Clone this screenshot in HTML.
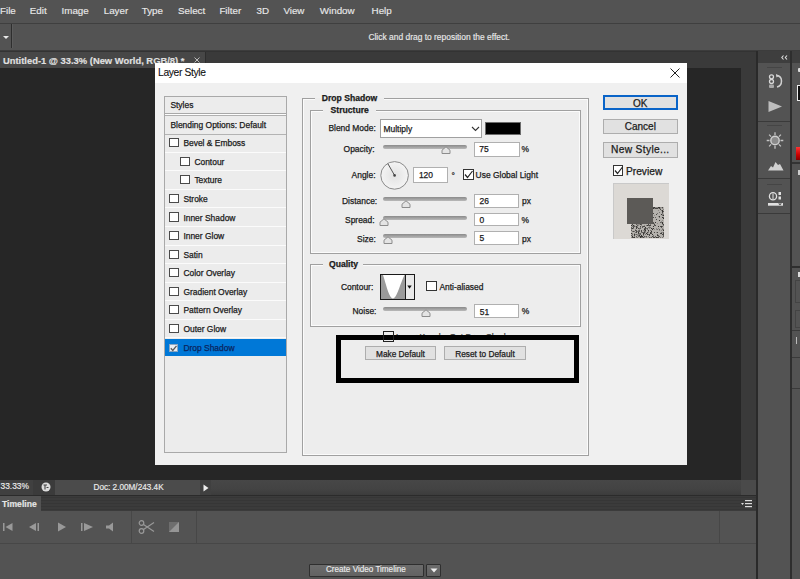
<!DOCTYPE html>
<html><head><meta charset="utf-8">
<style>
*{box-sizing:border-box;margin:0;padding:0}
html,body{width:800px;height:579px;overflow:hidden;background:#262626;font-family:"Liberation Sans",sans-serif;position:relative}
.a{position:absolute}
.t{position:absolute;white-space:nowrap;line-height:1}
.t{-webkit-text-stroke:0.15px currentColor}
.dl .t,.dl .btn{-webkit-text-stroke:0.25px currentColor}
.btn{position:absolute;background:#e1e1e1;border:1px solid #adadad;text-align:center;font-size:8.3px;color:#1b1b1b;line-height:12px;white-space:nowrap}
</style></head><body>
<!-- MENU -->
<div class="a" style="left:0;top:0;width:800px;height:23px;background:#535353"></div>
<div class="a" style="left:0;top:23px;width:800px;height:1px;background:#3f3f3f"></div>
<span class="t" style="left:0.0px;top:6.30px;font-size:9.80px;color:#e8e8e8;">File</span>
<span class="t" style="left:29.8px;top:6.30px;font-size:9.80px;color:#e8e8e8;">Edit</span>
<span class="t" style="left:61.5px;top:6.30px;font-size:9.80px;color:#e8e8e8;">Image</span>
<span class="t" style="left:103.7px;top:6.30px;font-size:9.80px;color:#e8e8e8;">Layer</span>
<span class="t" style="left:141.7px;top:6.30px;font-size:9.80px;color:#e8e8e8;">Type</span>
<span class="t" style="left:178.0px;top:6.30px;font-size:9.80px;color:#e8e8e8;">Select</span>
<span class="t" style="left:219.4px;top:6.30px;font-size:9.80px;color:#e8e8e8;">Filter</span>
<span class="t" style="left:256.6px;top:6.30px;font-size:9.80px;color:#e8e8e8;">3D</span>
<span class="t" style="left:283.4px;top:6.30px;font-size:9.80px;color:#e8e8e8;">View</span>
<span class="t" style="left:319.8px;top:6.30px;font-size:9.80px;color:#e8e8e8;">Window</span>
<span class="t" style="left:371.6px;top:6.30px;font-size:9.80px;color:#e8e8e8;">Help</span>
<!-- OPTIONS -->
<div class="a" style="left:0;top:24px;width:800px;height:27px;background:#535353"></div>
<div class="a" style="left:0;top:50px;width:800px;height:1px;background:#3c3c3c"></div>
<div class="a" style="left:3px;top:36px;width:0;height:0;border-left:3px solid transparent;border-right:3px solid transparent;border-top:3px solid #e8e8e8"></div>
<div class="a" style="left:11px;top:24px;width:1px;height:24px;background:#2e2e2e"></div>
<div class="a" style="left:12px;top:24px;width:1px;height:24px;background:#5c5c5c"></div>
<span class="t" style="left:368.4px;top:32.85px;font-size:8.45px;color:#e8e8e8;">Click and drag to reposition the effect.</span>
<!-- TAB BAR -->
<div class="a" style="left:0;top:51px;width:756px;height:17px;background:#3a3a3a"></div>
<div class="a" style="left:0;top:51px;width:756px;height:1px;background:#333"></div>
<div class="a" style="left:0;top:52px;width:205px;height:16px;background:#474747"></div>
<div class="a" style="left:205px;top:52px;width:1px;height:16px;background:#2e2e2e"></div>
<span class="t" style="left:3.0px;top:56.44px;font-size:9.40px;color:#e0e0e0;font-weight:bold;">Untitled-1 @ 33.3% (New World, RGB/8) *</span><svg class="a" style="left:194px;top:57px" width="6" height="6"><path d="M0.5 0.5L5.5 5.5M5.5 0.5L0.5 5.5" stroke="#bbb" stroke-width="1"/></svg>
<!-- RIGHT -->
<div class="a" style="left:741px;top:68px;width:15px;height:412px;background:#3a3a3a"></div>
<div class="a" style="left:756px;top:51px;width:2px;height:528px;background:#2a2a2a"></div>
<div class="a" style="left:758px;top:51px;width:42px;height:12px;background:#3e3e3e"></div>
<div class="a" style="left:758px;top:63px;width:32px;height:516px;background:#535353"></div>
<div class="a" style="left:790px;top:51px;width:2px;height:528px;background:#2e2e2e"></div>
<div class="a" style="left:792px;top:63px;width:8px;height:516px;background:#535353"></div>
<!-- STATUS -->
<div class="a" style="left:0;top:480px;width:741px;height:15px;background:linear-gradient(#474747,#434343 60%,#3c3c3c)"></div>
<div class="a" style="left:0;top:480px;width:33px;height:15px;background:#404040"></div>
<div class="a" style="left:33px;top:480px;width:22px;height:15px;background:#3b3b3b"></div>
<div class="a" style="left:55px;top:480px;width:145px;height:15px;background:#4b4b4b"></div>
<div class="a" style="left:200px;top:480px;width:11px;height:15px;background:#404040"></div>
<div class="a" style="left:741px;top:480px;width:15px;height:15px;background:#4a4a4a"></div>
<!-- TIMELINE -->
<div class="a" style="left:0;top:495px;width:756px;height:16px;background:repeating-linear-gradient(#3b3b3b 0 2px,#363636 2px 3px)"></div>
<div class="a" style="left:0;top:495px;width:756px;height:1px;background:#2b2b2b"></div>
<div class="a" style="left:0;top:496px;width:41px;height:15px;background:#535353"></div>
<div class="a" style="left:0;top:511px;width:756px;height:68px;background:#535353"></div>
<div class="a" style="left:0;top:543px;width:756px;height:1px;background:#474747"></div>
<div class="a" style="left:131px;top:511px;width:1px;height:32px;background:#474747"></div>
<div class="a" style="left:196px;top:511px;width:1px;height:32px;background:#474747"></div>
<div class="a" style="left:719px;top:511px;width:1px;height:32px;background:#474747"></div>
<span class="t" style="left:0.5px;top:482.39px;font-size:8.40px;color:#ececec;">33.33%</span>
<svg class="a" style="left:40.5px;top:482px" width="10" height="10"><circle cx="5" cy="5" r="4.5" fill="#dcdcdc"/><path d="M2.5 3H6M4 3V7.5M5.5 5.5L7.5 5.5" stroke="#444" stroke-width="1.1"/></svg>
<span class="t" style="left:93.5px;top:483.86px;font-size:8.20px;color:#ececec;">Doc: 2.00M/243.4K</span>
<svg class="a" style="left:203px;top:484px" width="6" height="8"><path d="M0.5 0.5L5.5 4L0.5 7.5Z" fill="#eee"/></svg>
<span class="t" style="left:2.0px;top:499.72px;font-size:8.60px;color:#e6e6e6;font-weight:bold;">Timeline</span>
<svg class="a" style="left:0px;top:520px" width="130" height="14"><rect x="3" y="3" width="1.5" height="8" fill="#999999"/><path d="M12.5 3V11L5.5 7Z" fill="#999999"/><path d="M36 3V11L29 7Z" fill="#999999"/><rect x="37.5" y="3" width="1.5" height="8" fill="#999999"/><path d="M58 2.5V11.5L66 7Z" fill="#999999"/><rect x="81" y="3" width="1.5" height="8" fill="#999999"/><path d="M84 3V11L93 7Z" fill="#999999"/><path d="M106 5.5H109L113 2.5V11.5L109 8.5H106Z" fill="#999999"/></svg>
<svg class="a" style="left:138px;top:519px" width="50" height="16"><circle cx="3.5" cy="4" r="2.3" fill="none" stroke="#999999" stroke-width="1.2"/><circle cx="3.5" cy="12" r="2.3" fill="none" stroke="#999999" stroke-width="1.2"/><path d="M5.5 5.5L16 12.5M5.5 10.5L16 3.5" stroke="#999999" stroke-width="1.2"/><rect x="31" y="3" width="10" height="10" fill="#6e6e6e"/><path d="M31 13L41 3V13Z" fill="#959595"/></svg>
<svg class="a" style="left:781px;top:55px" width="7" height="5"><path d="M2.5 0.5L0.8 2.5L2.5 4.5M6 0.5L4.3 2.5L6 4.5" stroke="#ddd" stroke-width="1.1" fill="none"/></svg>
<div class="a" style="left:758px;top:121px;width:32px;height:1px;background:#3a3a3a"></div>
<div class="a" style="left:758px;top:178px;width:32px;height:1px;background:#3a3a3a"></div>
<div class="a" style="left:758px;top:213px;width:32px;height:1px;background:#3a3a3a"></div>
<svg class="a" style="left:758px;top:63px" width="32" height="150"><rect x="9" y="4" width="15" height="1" fill="#454545"/><circle cx="13.5" cy="13.8" r="2" fill="none" stroke="#d8d8d8" stroke-width="1.3"/><circle cx="13.5" cy="18.5" r="2" fill="none" stroke="#d8d8d8" stroke-width="1.3"/><rect x="11" y="21.5" width="5" height="3.5" rx="1" fill="#a8a8a8"/><path d="M18.5 12.5Q23.5 13 23.5 18Q23.5 23 19 24" stroke="#d0d0d0" stroke-width="1.5" fill="none"/><path d="M18 11L21 12.5L18.5 14.5Z" fill="#d0d0d0"/><path d="M10.5 38V49L24 43.5Z" fill="#bdbdbd"/><rect x="9" y="62" width="15" height="1" fill="#454545"/><path d="M22.5 77.5L25.3 77.5M20.9 81.4L22.9 83.4M17.0 83.0L17.0 85.8M13.1 81.4L11.1 83.4M11.5 77.5L8.7 77.5M13.1 73.6L11.1 71.6M17.0 72.0L17.0 69.2M20.9 73.6L22.9 71.6" stroke="#c4c4c4" stroke-width="1.3"/><circle cx="17" cy="77.5" r="4.2" fill="#8a8a8a" stroke="#d0d0d0" stroke-width="1.4"/><path d="M10 107.5L13 103L15 104.5L17.5 99L20 102L22 101L25.5 107.5Z" fill="#d0d0d0"/><rect x="9" y="121" width="15" height="1" fill="#454545"/><circle cx="15" cy="133.2" r="3.6" fill="none" stroke="#e0e0e0" stroke-width="1.3"/><path d="M15 130.5V136" stroke="#e0e0e0" stroke-width="1"/><rect x="20.5" y="129" width="2.5" height="3" fill="#e0e0e0"/><rect x="20.5" y="133.5" width="2.5" height="3" fill="#e0e0e0"/><rect x="10" y="140" width="15" height="2.7" fill="#e0e0e0"/><path d="M20 140.5H24L22 142.2Z" fill="#444"/></svg>
<div class="a" style="left:797px;top:85px;width:3px;height:15.5px;border:1px solid #eee;border-right:0;background:#111"></div>
<div class="a" style="left:797.5px;top:68px;width:3px;height:3.5px;background:#ddd;border-radius:1px"></div>
<div class="a" style="left:792px;top:162px;width:8px;height:1.5px;background:#333"></div>
<div class="a" style="left:798px;top:170px;width:2px;height:5px;background:#ccc"></div>
<div class="a" style="left:796.4px;top:146.5px;width:4px;height:13.5px;background:linear-gradient(#f33,#c00 60%,#800)"></div>
<div class="a" style="left:792px;top:266px;width:8px;height:1.5px;background:#2e2e2e"></div>
<div class="a" style="left:797.5px;top:272px;width:2.5px;height:5px;background:#ddd"></div>
<div class="a" style="left:795px;top:280px;width:6px;height:23px;border:1px solid #444;border-right:0"></div>
<div class="a" style="left:795px;top:309.5px;width:6px;height:18px;border:1px solid #444;border-right:0"></div>
<div class="a" style="left:792px;top:330px;width:8px;height:1px;background:#3a3a3a"></div>
<div class="a" style="left:796px;top:337px;width:1px;height:7px;background:#bbb"></div>
<div class="a" style="left:792px;top:357px;width:8px;height:1px;background:#3a3a3a"></div>
<div class="a" style="left:792px;top:388px;width:8px;height:1px;background:#3a3a3a"></div>
<svg class="a" style="left:740px;top:499px" width="14" height="9"><path d="M1 4H4L2.5 6Z" fill="#ddd"/><rect x="5" y="1" width="7" height="1.2" fill="#ddd"/><rect x="5" y="4" width="7" height="1.2" fill="#ddd"/><rect x="5" y="7" width="7" height="1.2" fill="#ddd"/></svg>
<div class="a" style="left:309px;top:563.6px;width:115px;height:13.4px;background:linear-gradient(#6c6c6c,#626262);border:1px solid #2f2f2f;border-radius:1px"></div>
<span class="t" style="left:326.0px;top:566.10px;font-size:8.15px;color:#ececec;">Create Video Timeline</span>
<div class="a" style="left:426.4px;top:563.6px;width:14.6px;height:13.4px;background:linear-gradient(#6c6c6c,#626262);border:1px solid #2f2f2f;border-radius:1px"></div>
<svg class="a" style="left:430px;top:568px" width="8" height="5"><path d="M0.5 0.5H7.5L4 4.5Z" fill="#eee"/></svg>
<!-- <div class="a" style="left:0.0px;top:0.0px;width:532.0px;height:20.0px;background:#fff"></div>
<span class="t" style="left:3.0px;top:5.08px;font-size:10.30px;color:#111;letter-spacing:-0.35px;-webkit-text-stroke:0.1px #111">Layer Style</span>
<svg class="a" style="left:515px;top:5px" width="10" height="10" viewBox="0 0 10 10"><path d="M0.5 0.5L9.5 9.5M9.5 0.5L0.5 9.5" stroke="#222" stroke-width="1"/></svg>
<div class="a" style="left:9.4px;top:32.7px;width:123.1px;height:357.7px;background:#ececec;border:1px solid #a9a9a9"></div>
<div class="a" style="left:10.4px;top:50.3px;width:121.1px;height:1.0px;background:#a8a8a8"></div>
<div class="a" style="left:10.4px;top:51.3px;width:121.1px;height:1.0px;background:#fdfdfd"></div>
<div class="a" style="left:10.4px;top:52.4px;width:121.1px;height:1.0px;background:#b0b0b0"></div>
<div class="a" style="left:10.4px;top:71.0px;width:121.1px;height:1.0px;background:#b3b3b3"></div>
<span class="t" style="left:15.4px;top:38.05px;font-size:8.45px;color:#1b1b1b;">Styles</span>
<span class="t" style="left:15.4px;top:57.65px;font-size:8.45px;color:#1b1b1b;">Blending Options: Default</span>
<div class="a" style="left:10.4px;top:88.7px;width:121.1px;height:1.0px;background:#fbfbfb"></div>
<div class="a" style="left:14.4px;top:75.1px;width:10.0px;height:9.3px;background:#fff;border:1px solid #4a4a4a"></div>
<span class="t" style="left:28.4px;top:76.25px;font-size:8.45px;color:#1b1b1b;">Bevel &amp; Emboss</span>
<div class="a" style="left:10.4px;top:107.2px;width:121.1px;height:1.0px;background:#fbfbfb"></div>
<div class="a" style="left:25.4px;top:93.7px;width:10.0px;height:9.3px;background:#fff;border:1px solid #4a4a4a"></div>
<span class="t" style="left:39.4px;top:94.82px;font-size:8.45px;color:#1b1b1b;">Contour</span>
<div class="a" style="left:10.4px;top:125.8px;width:121.1px;height:1.0px;background:#fbfbfb"></div>
<div class="a" style="left:25.4px;top:112.2px;width:10.0px;height:9.3px;background:#fff;border:1px solid #4a4a4a"></div>
<span class="t" style="left:39.4px;top:113.39px;font-size:8.45px;color:#1b1b1b;">Texture</span>
<div class="a" style="left:10.4px;top:144.4px;width:121.1px;height:1.0px;background:#fbfbfb"></div>
<div class="a" style="left:14.4px;top:130.8px;width:10.0px;height:9.3px;background:#fff;border:1px solid #4a4a4a"></div>
<span class="t" style="left:28.4px;top:131.96px;font-size:8.45px;color:#1b1b1b;">Stroke</span>
<div class="a" style="left:10.4px;top:162.9px;width:121.1px;height:1.0px;background:#fbfbfb"></div>
<div class="a" style="left:14.4px;top:149.4px;width:10.0px;height:9.3px;background:#fff;border:1px solid #4a4a4a"></div>
<span class="t" style="left:28.4px;top:150.53px;font-size:8.45px;color:#1b1b1b;">Inner Shadow</span>
<div class="a" style="left:10.4px;top:181.5px;width:121.1px;height:1.0px;background:#fbfbfb"></div>
<div class="a" style="left:14.4px;top:167.9px;width:10.0px;height:9.3px;background:#fff;border:1px solid #4a4a4a"></div>
<span class="t" style="left:28.4px;top:169.10px;font-size:8.45px;color:#1b1b1b;">Inner Glow</span>
<div class="a" style="left:10.4px;top:200.1px;width:121.1px;height:1.0px;background:#fbfbfb"></div>
<div class="a" style="left:14.4px;top:186.5px;width:10.0px;height:9.3px;background:#fff;border:1px solid #4a4a4a"></div>
<span class="t" style="left:28.4px;top:187.67px;font-size:8.45px;color:#1b1b1b;">Satin</span>
<div class="a" style="left:10.4px;top:218.7px;width:121.1px;height:1.0px;background:#fbfbfb"></div>
<div class="a" style="left:14.4px;top:205.1px;width:10.0px;height:9.3px;background:#fff;border:1px solid #4a4a4a"></div>
<span class="t" style="left:28.4px;top:206.24px;font-size:8.45px;color:#1b1b1b;">Color Overlay</span>
<div class="a" style="left:10.4px;top:237.2px;width:121.1px;height:1.0px;background:#fbfbfb"></div>
<div class="a" style="left:14.4px;top:223.7px;width:10.0px;height:9.3px;background:#fff;border:1px solid #4a4a4a"></div>
<span class="t" style="left:28.4px;top:224.81px;font-size:8.45px;color:#1b1b1b;">Gradient Overlay</span>
<div class="a" style="left:10.4px;top:255.8px;width:121.1px;height:1.0px;background:#fbfbfb"></div>
<div class="a" style="left:14.4px;top:242.2px;width:10.0px;height:9.3px;background:#fff;border:1px solid #4a4a4a"></div>
<span class="t" style="left:28.4px;top:243.38px;font-size:8.45px;color:#1b1b1b;">Pattern Overlay</span>
<div class="a" style="left:10.4px;top:274.4px;width:121.1px;height:1.0px;background:#fbfbfb"></div>
<div class="a" style="left:14.4px;top:260.8px;width:10.0px;height:9.3px;background:#fff;border:1px solid #4a4a4a"></div>
<span class="t" style="left:28.4px;top:261.95px;font-size:8.45px;color:#1b1b1b;">Outer Glow</span>
<div class="a" style="left:10.4px;top:275.9px;width:121.1px;height:17.6px;background:#0078d7"></div>
<div class="a" style="left:14.4px;top:280.5px;width:9.0px;height:8.5px;background:#e9eef3;border:1px solid #8aa6c2"></div>
<svg class="a" style="left:14.4px;top:280.5px" width="9" height="9"><path d="M1.8 4.3L3.8 6.5L7.5 1.9" stroke="#5a5a5a" stroke-width="1.3" fill="none"/></svg>
<span class="t" style="left:28.4px;top:280.62px;font-size:8.45px;color:#0a2560;">Drop Shadow</span>
<div class="a" style="left:147.3px;top:35.4px;width:287.0px;height:358.0px;border:1px solid #a0a0a0;box-shadow:inset 0 0 0 1px #fbfbfb;background:#ededed"></div>
<div class="a" style="left:160.3px;top:30.0px;width:68.7px;height:5.4px;background:#f0f0f0"></div>
<div class="a" style="left:160.3px;top:35.4px;width:68.7px;height:4.6px;background:#ededed"></div>
<span class="t" style="left:166.8px;top:31.12px;font-size:8.60px;color:#1b1b1b;font-weight:bold;">Drop Shadow</span>
<div class="a" style="left:155.4px;top:47.3px;width:270.9px;height:144.1px;border:1px solid #a0a0a0;box-shadow:inset 0 0 0 1px #fbfbfb;background:transparent"></div>
<div class="a" style="left:168.0px;top:42.0px;width:53.0px;height:10.0px;background:#ededed"></div>
<span class="t" style="left:175.6px;top:43.02px;font-size:8.60px;color:#1b1b1b;font-weight:bold;">Structure</span>
<span class="t" style="left:173.4px;top:61.35px;font-size:8.45px;color:#1b1b1b;">Blend Mode:</span>
<div class="a" style="left:224.8px;top:56.3px;width:101.8px;height:19.0px;background:#fff;border:1px solid #a0a0a0"></div>
<span class="t" style="left:228.5px;top:61.75px;font-size:8.45px;color:#1b1b1b;">Multiply</span>
<svg class="a" style="left:315.5px;top:63px" width="9" height="6"><path d="M1 1L4.5 4.5L8 1" stroke="#333" stroke-width="1.1" fill="none"/></svg>
<div class="a" style="left:330.4px;top:59.2px;width:35.6px;height:12.8px;background:#000;border:1px solid #6c6c6c"></div>
<span class="t" style="left:188.6px;top:81.85px;font-size:8.45px;color:#1b1b1b;">Opacity:</span>
<div class="a" style="left:228.0px;top:81.6px;width:84.0px;height:4.0px;border-radius:2px;background:linear-gradient(#8a8a8a,#b9b9b9)"></div>
<svg class="a" style="left:286.0px;top:83.0px" width="10" height="8" viewBox="0 0 10 8"><path d="M1 7.5V4.2L5 0.8L9 4.2V7.5Z" fill="#e4e4e4" stroke="#8c8c8c" stroke-width="1" stroke-linejoin="round"/></svg>
<div class="a" style="left:318.8px;top:78.5px;width:45.9px;height:15.0px;background:#fff;border:1px solid #b0b0b0"></div>
<span class="t" style="left:324.3px;top:81.65px;font-size:8.45px;color:#1b1b1b;">75</span>
<span class="t" style="left:366.6px;top:81.85px;font-size:8.45px;color:#1b1b1b;">%</span>
<span class="t" style="left:196.6px;top:107.85px;font-size:8.45px;color:#1b1b1b;">Angle:</span>
<svg class="a" style="left:225px;top:98px" width="30" height="30" viewBox="0 0 30 30"><defs><radialGradient id="rg" cx="0.5" cy="0.5" r="0.5"><stop offset="0" stop-color="#e2e2e2"/><stop offset="1" stop-color="#f4f4f4"/></radialGradient></defs><circle cx="14.6" cy="14.4" r="13.8" fill="url(#rg)" stroke="#8a8a8a" stroke-width="1"/><path d="M14.6 14.4L7.8 2.6" stroke="#555" stroke-width="1"/><circle cx="14.6" cy="14.4" r="1.3" fill="#444"/></svg>
<div class="a" style="left:258.4px;top:104.4px;width:34.6px;height:15.2px;background:#fff;border:1px solid #b0b0b0"></div>
<span class="t" style="left:263.9px;top:107.55px;font-size:8.45px;color:#1b1b1b;">120</span>
<span class="t" style="left:296.5px;top:108.85px;font-size:8.45px;color:#1b1b1b;">°</span>
<div class="a" style="left:308.0px;top:106.0px;width:11.0px;height:11.0px;background:#fff;border:1px solid #333"></div>
<svg class="a" style="left:308px;top:106px" width="11" height="11"><path d="M2 5.5L4.5 8.5L9.5 2" stroke="#222" stroke-width="1.2" fill="none"/></svg>
<span class="t" style="left:320.6px;top:107.85px;font-size:8.45px;color:#1b1b1b;">Use Global Light</span>
<span class="t" style="left:187.0px;top:134.35px;font-size:8.45px;color:#1b1b1b;">Distance:</span>
<div class="a" style="left:228.0px;top:134.3px;width:84.0px;height:4.0px;border-radius:2px;background:linear-gradient(#8a8a8a,#b9b9b9)"></div>
<svg class="a" style="left:246.0px;top:136.8px" width="10" height="8" viewBox="0 0 10 8"><path d="M1 7.5V4.2L5 0.8L9 4.2V7.5Z" fill="#e4e4e4" stroke="#8c8c8c" stroke-width="1" stroke-linejoin="round"/></svg>
<div class="a" style="left:319.0px;top:131.0px;width:45.4px;height:14.0px;background:#fff;border:1px solid #b0b0b0"></div>
<span class="t" style="left:324.5px;top:134.15px;font-size:8.45px;color:#1b1b1b;">26</span>
<span class="t" style="left:367.0px;top:134.35px;font-size:8.45px;color:#1b1b1b;">px</span>
<span class="t" style="left:190.0px;top:152.75px;font-size:8.45px;color:#1b1b1b;">Spread:</span>
<div class="a" style="left:228.0px;top:153.0px;width:84.0px;height:4.0px;border-radius:2px;background:linear-gradient(#8a8a8a,#b9b9b9)"></div>
<svg class="a" style="left:224.0px;top:154.5px" width="10" height="8" viewBox="0 0 10 8"><path d="M1 7.5V4.2L5 0.8L9 4.2V7.5Z" fill="#e4e4e4" stroke="#8c8c8c" stroke-width="1" stroke-linejoin="round"/></svg>
<div class="a" style="left:319.0px;top:149.5px;width:45.4px;height:13.8px;background:#fff;border:1px solid #b0b0b0"></div>
<span class="t" style="left:324.5px;top:152.65px;font-size:8.45px;color:#1b1b1b;">0</span>
<span class="t" style="left:366.6px;top:152.75px;font-size:8.45px;color:#1b1b1b;">%</span>
<span class="t" style="left:202.0px;top:171.85px;font-size:8.45px;color:#1b1b1b;">Size:</span>
<div class="a" style="left:228.0px;top:171.4px;width:84.0px;height:4.0px;border-radius:2px;background:linear-gradient(#8a8a8a,#b9b9b9)"></div>
<svg class="a" style="left:228.3px;top:172.5px" width="10" height="8" viewBox="0 0 10 8"><path d="M1 7.5V4.2L5 0.8L9 4.2V7.5Z" fill="#e4e4e4" stroke="#8c8c8c" stroke-width="1" stroke-linejoin="round"/></svg>
<div class="a" style="left:319.0px;top:168.2px;width:45.4px;height:13.8px;background:#fff;border:1px solid #b0b0b0"></div>
<span class="t" style="left:324.5px;top:171.35px;font-size:8.45px;color:#1b1b1b;">5</span>
<span class="t" style="left:367.0px;top:171.85px;font-size:8.45px;color:#1b1b1b;">px</span>
<div class="a" style="left:155.3px;top:201.1px;width:271.0px;height:62.9px;border:1px solid #a0a0a0;box-shadow:inset 0 0 0 1px #fbfbfb;background:transparent"></div>
<div class="a" style="left:168.0px;top:196.0px;width:40.0px;height:10.0px;background:#ededed"></div>
<span class="t" style="left:174.0px;top:196.72px;font-size:8.60px;color:#1b1b1b;font-weight:bold;">Quality</span>
<span class="t" style="left:185.9px;top:219.85px;font-size:8.45px;color:#1b1b1b;">Contour:</span>
<svg class="a" style="left:225.2px;top:210.9px" width="35" height="26" viewBox="0 0 35 26"><rect x="0.5" y="0.5" width="34" height="25" fill="#e9e9e9" stroke="#1a1a1a"/><rect x="1" y="1" width="24.5" height="24" fill="#9a9a9a"/><path d="M3 1 C6 10, 9 24, 13 24.5 C17 24, 20 10, 24.5 1 Z" fill="#fff"/><path d="M25.5 1V25" stroke="#1a1a1a"/><path d="M27.3 11.5H31.7L29.5 14.8Z" fill="#111"/></svg>
<div class="a" style="left:271.3px;top:218.2px;width:10.7px;height:10.3px;background:#fff;border:1px solid #333"></div>
<span class="t" style="left:284.4px;top:219.85px;font-size:8.45px;color:#1b1b1b;">Anti-aliased</span>
<span class="t" style="left:197.5px;top:243.85px;font-size:8.45px;color:#1b1b1b;">Noise:</span>
<div class="a" style="left:228.2px;top:243.7px;width:84.0px;height:4.0px;border-radius:2px;background:linear-gradient(#8a8a8a,#b9b9b9)"></div>
<svg class="a" style="left:265.6px;top:245.5px" width="10" height="8" viewBox="0 0 10 8"><path d="M1 7.5V4.2L5 0.8L9 4.2V7.5Z" fill="#e4e4e4" stroke="#8c8c8c" stroke-width="1" stroke-linejoin="round"/></svg>
<div class="a" style="left:319.2px;top:241.4px;width:45.0px;height:13.8px;background:#fff;border:1px solid #b0b0b0"></div>
<span class="t" style="left:324.7px;top:244.55px;font-size:8.45px;color:#1b1b1b;">51</span>
<span class="t" style="left:366.8px;top:243.85px;font-size:8.45px;color:#1b1b1b;">%</span>
<span class="t" style="left:241.0px;top:270.35px;font-size:8.45px;color:#444;">Layer Knocks Out Drop Shadow</span>
<div class="a" style="left:180.6px;top:272.0px;width:243.2px;height:48.0px;border:5px solid #000;background:#ededed"></div>
<div class="a" style="left:228.0px;top:268.3px;width:10.8px;height:10.3px;background:transparent;border:1px solid #222"></div>
<div class="btn" style="left:210.3px;top:283.3px;width:70.3px;height:14px;line-height:14.6px">Make Default</div>
<div class="btn" style="left:289.1px;top:283.3px;width:81.8px;height:14px;line-height:14.6px">Reset to Default</div>
<div class="btn" style="left:447.6px;top:32.3px;width:75.4px;height:14.7px;border:2px solid #0a64c8;font-size:10px;line-height:13.5px">OK</div>
<div class="btn" style="left:447.6px;top:55.7px;width:75.4px;height:15px;font-size:10px;line-height:13.6px">Cancel</div>
<div class="btn" style="left:447.6px;top:79.2px;width:75.4px;height:15.6px;font-size:10.2px;line-height:14.4px;letter-spacing:0.35px">New Style...</div>
<div class="a" style="left:457.8px;top:102.0px;width:10.6px;height:10.7px;background:#fff;border:1px solid #333"></div>
<svg class="a" style="left:457.8px;top:102px" width="11" height="11"><path d="M2 5.5L4.5 8.5L9.5 2" stroke="#222" stroke-width="1.2" fill="none"/></svg>
<span class="t" style="left:471.0px;top:103.57px;font-size:10.20px;color:#1b1b1b;">Preview</span>
<svg class="a" style="left:457.5px;top:120.2px" width="56" height="56" viewBox="0 0 56 56" shape-rendering="crispEdges"><rect x="0" y="0" width="56" height="56" fill="#dcd9d5" stroke="#c9c9c9"/><rect x="18" y="24" width="33" height="31" fill="#b5b2ad"/><rect x="40" y="24" width="1" height="1" fill="#4a4845"/><rect x="41" y="24" width="1" height="1" fill="#363532"/><rect x="42" y="24" width="1" height="1" fill="#8d8a86"/><rect x="43" y="24" width="1" height="1" fill="#8d8a86"/><rect x="44" y="24" width="1" height="1" fill="#8d8a86"/><rect x="45" y="24" width="1" height="1" fill="#363532"/><rect x="46" y="24" width="1" height="1" fill="#363532"/><rect x="47" y="24" width="1" height="1" fill="#8d8a86"/><rect x="48" y="24" width="1" height="1" fill="#8d8a86"/><rect x="49" y="24" width="1" height="1" fill="#4a4845"/><rect x="40" y="25" width="1" height="1" fill="#363532"/><rect x="41" y="25" width="1" height="1" fill="#757370"/><rect x="42" y="25" width="1" height="1" fill="#4a4845"/><rect x="43" y="25" width="1" height="1" fill="#4a4845"/><rect x="44" y="25" width="1" height="1" fill="#4a4845"/><rect x="45" y="25" width="1" height="1" fill="#8d8a86"/><rect x="46" y="25" width="1" height="1" fill="#4a4845"/><rect x="47" y="25" width="1" height="1" fill="#8d8a86"/><rect x="49" y="25" width="1" height="1" fill="#8d8a86"/><rect x="47" y="26" width="1" height="1" fill="#4a4845"/><rect x="50" y="26" width="1" height="1" fill="#8d8a86"/><rect x="45" y="27" width="1" height="1" fill="#8d8a86"/><rect x="48" y="27" width="1" height="1" fill="#757370"/><rect x="49" y="27" width="1" height="1" fill="#363532"/><rect x="49" y="28" width="1" height="1" fill="#363532"/><rect x="50" y="28" width="1" height="1" fill="#5e5c59"/><rect x="46" y="29" width="1" height="1" fill="#757370"/><rect x="49" y="29" width="1" height="1" fill="#4a4845"/><rect x="40" y="30" width="1" height="1" fill="#4a4845"/><rect x="44" y="30" width="1" height="1" fill="#757370"/><rect x="49" y="30" width="1" height="1" fill="#757370"/><rect x="43" y="31" width="1" height="1" fill="#4a4845"/><rect x="48" y="31" width="1" height="1" fill="#363532"/><rect x="49" y="31" width="1" height="1" fill="#8d8a86"/><rect x="50" y="31" width="1" height="1" fill="#8d8a86"/><rect x="41" y="32" width="1" height="1" fill="#8d8a86"/><rect x="49" y="32" width="1" height="1" fill="#757370"/><rect x="50" y="32" width="1" height="1" fill="#363532"/><rect x="45" y="33" width="1" height="1" fill="#8d8a86"/><rect x="46" y="33" width="1" height="1" fill="#363532"/><rect x="40" y="34" width="1" height="1" fill="#4a4845"/><rect x="42" y="34" width="1" height="1" fill="#5e5c59"/><rect x="46" y="34" width="1" height="1" fill="#757370"/><rect x="49" y="34" width="1" height="1" fill="#363532"/><rect x="50" y="34" width="1" height="1" fill="#5e5c59"/><rect x="50" y="35" width="1" height="1" fill="#363532"/><rect x="43" y="36" width="1" height="1" fill="#4a4845"/><rect x="46" y="37" width="1" height="1" fill="#363532"/><rect x="49" y="37" width="1" height="1" fill="#8d8a86"/><rect x="48" y="38" width="1" height="1" fill="#8d8a86"/><rect x="40" y="39" width="1" height="1" fill="#5e5c59"/><rect x="42" y="39" width="1" height="1" fill="#363532"/><rect x="47" y="39" width="1" height="1" fill="#5e5c59"/><rect x="48" y="39" width="1" height="1" fill="#757370"/><rect x="49" y="39" width="1" height="1" fill="#363532"/><rect x="40" y="40" width="1" height="1" fill="#4a4845"/><rect x="41" y="40" width="1" height="1" fill="#8d8a86"/><rect x="44" y="40" width="1" height="1" fill="#8d8a86"/><rect x="49" y="40" width="1" height="1" fill="#363532"/><rect x="19" y="41" width="1" height="1" fill="#4a4845"/><rect x="23" y="41" width="1" height="1" fill="#5e5c59"/><rect x="24" y="41" width="1" height="1" fill="#8d8a86"/><rect x="25" y="41" width="1" height="1" fill="#8d8a86"/><rect x="26" y="41" width="1" height="1" fill="#8d8a86"/><rect x="27" y="41" width="1" height="1" fill="#4a4845"/><rect x="28" y="41" width="1" height="1" fill="#5e5c59"/><rect x="35" y="41" width="1" height="1" fill="#4a4845"/><rect x="37" y="41" width="1" height="1" fill="#757370"/><rect x="41" y="41" width="1" height="1" fill="#4a4845"/><rect x="49" y="41" width="1" height="1" fill="#8d8a86"/><rect x="50" y="41" width="1" height="1" fill="#4a4845"/><rect x="18" y="42" width="1" height="1" fill="#363532"/><rect x="19" y="42" width="1" height="1" fill="#8d8a86"/><rect x="20" y="42" width="1" height="1" fill="#363532"/><rect x="21" y="42" width="1" height="1" fill="#8d8a86"/><rect x="24" y="42" width="1" height="1" fill="#5e5c59"/><rect x="25" y="42" width="1" height="1" fill="#8d8a86"/><rect x="28" y="42" width="1" height="1" fill="#8d8a86"/><rect x="31" y="42" width="1" height="1" fill="#8d8a86"/><rect x="33" y="42" width="1" height="1" fill="#757370"/><rect x="34" y="42" width="1" height="1" fill="#363532"/><rect x="35" y="42" width="1" height="1" fill="#5e5c59"/><rect x="36" y="42" width="1" height="1" fill="#4a4845"/><rect x="37" y="42" width="1" height="1" fill="#4a4845"/><rect x="41" y="42" width="1" height="1" fill="#5e5c59"/><rect x="42" y="42" width="1" height="1" fill="#4a4845"/><rect x="50" y="42" width="1" height="1" fill="#757370"/><rect x="19" y="43" width="1" height="1" fill="#757370"/><rect x="20" y="43" width="1" height="1" fill="#5e5c59"/><rect x="21" y="43" width="1" height="1" fill="#5e5c59"/><rect x="22" y="43" width="1" height="1" fill="#8d8a86"/><rect x="23" y="43" width="1" height="1" fill="#363532"/><rect x="24" y="43" width="1" height="1" fill="#8d8a86"/><rect x="27" y="43" width="1" height="1" fill="#4a4845"/><rect x="29" y="43" width="1" height="1" fill="#5e5c59"/><rect x="30" y="43" width="1" height="1" fill="#4a4845"/><rect x="31" y="43" width="1" height="1" fill="#4a4845"/><rect x="36" y="43" width="1" height="1" fill="#8d8a86"/><rect x="40" y="43" width="1" height="1" fill="#363532"/><rect x="45" y="43" width="1" height="1" fill="#363532"/><rect x="47" y="43" width="1" height="1" fill="#4a4845"/><rect x="48" y="43" width="1" height="1" fill="#363532"/><rect x="49" y="43" width="1" height="1" fill="#5e5c59"/><rect x="18" y="44" width="1" height="1" fill="#5e5c59"/><rect x="20" y="44" width="1" height="1" fill="#4a4845"/><rect x="23" y="44" width="1" height="1" fill="#4a4845"/><rect x="24" y="44" width="1" height="1" fill="#5e5c59"/><rect x="27" y="44" width="1" height="1" fill="#757370"/><rect x="29" y="44" width="1" height="1" fill="#5e5c59"/><rect x="32" y="44" width="1" height="1" fill="#363532"/><rect x="35" y="44" width="1" height="1" fill="#757370"/><rect x="36" y="44" width="1" height="1" fill="#757370"/><rect x="37" y="44" width="1" height="1" fill="#757370"/><rect x="48" y="44" width="1" height="1" fill="#5e5c59"/><rect x="18" y="45" width="1" height="1" fill="#5e5c59"/><rect x="19" y="45" width="1" height="1" fill="#363532"/><rect x="20" y="45" width="1" height="1" fill="#757370"/><rect x="23" y="45" width="1" height="1" fill="#4a4845"/><rect x="25" y="45" width="1" height="1" fill="#4a4845"/><rect x="26" y="45" width="1" height="1" fill="#757370"/><rect x="27" y="45" width="1" height="1" fill="#5e5c59"/><rect x="31" y="45" width="1" height="1" fill="#5e5c59"/><rect x="32" y="45" width="1" height="1" fill="#4a4845"/><rect x="33" y="45" width="1" height="1" fill="#757370"/><rect x="34" y="45" width="1" height="1" fill="#5e5c59"/><rect x="36" y="45" width="1" height="1" fill="#8d8a86"/><rect x="38" y="45" width="1" height="1" fill="#363532"/><rect x="39" y="45" width="1" height="1" fill="#8d8a86"/><rect x="40" y="45" width="1" height="1" fill="#363532"/><rect x="43" y="45" width="1" height="1" fill="#8d8a86"/><rect x="45" y="45" width="1" height="1" fill="#8d8a86"/><rect x="49" y="45" width="1" height="1" fill="#8d8a86"/><rect x="18" y="46" width="1" height="1" fill="#8d8a86"/><rect x="22" y="46" width="1" height="1" fill="#8d8a86"/><rect x="26" y="46" width="1" height="1" fill="#8d8a86"/><rect x="31" y="46" width="1" height="1" fill="#363532"/><rect x="32" y="46" width="1" height="1" fill="#5e5c59"/><rect x="34" y="46" width="1" height="1" fill="#757370"/><rect x="39" y="46" width="1" height="1" fill="#363532"/><rect x="41" y="46" width="1" height="1" fill="#8d8a86"/><rect x="43" y="46" width="1" height="1" fill="#8d8a86"/><rect x="44" y="46" width="1" height="1" fill="#757370"/><rect x="46" y="46" width="1" height="1" fill="#5e5c59"/><rect x="49" y="46" width="1" height="1" fill="#757370"/><rect x="50" y="46" width="1" height="1" fill="#757370"/><rect x="18" y="47" width="1" height="1" fill="#5e5c59"/><rect x="22" y="47" width="1" height="1" fill="#4a4845"/><rect x="23" y="47" width="1" height="1" fill="#5e5c59"/><rect x="25" y="47" width="1" height="1" fill="#757370"/><rect x="26" y="47" width="1" height="1" fill="#5e5c59"/><rect x="28" y="47" width="1" height="1" fill="#4a4845"/><rect x="30" y="47" width="1" height="1" fill="#8d8a86"/><rect x="31" y="47" width="1" height="1" fill="#757370"/><rect x="32" y="47" width="1" height="1" fill="#363532"/><rect x="35" y="47" width="1" height="1" fill="#363532"/><rect x="37" y="47" width="1" height="1" fill="#757370"/><rect x="38" y="47" width="1" height="1" fill="#8d8a86"/><rect x="46" y="47" width="1" height="1" fill="#8d8a86"/><rect x="48" y="47" width="1" height="1" fill="#8d8a86"/><rect x="50" y="47" width="1" height="1" fill="#363532"/><rect x="19" y="48" width="1" height="1" fill="#757370"/><rect x="20" y="48" width="1" height="1" fill="#4a4845"/><rect x="21" y="48" width="1" height="1" fill="#757370"/><rect x="23" y="48" width="1" height="1" fill="#4a4845"/><rect x="24" y="48" width="1" height="1" fill="#757370"/><rect x="25" y="48" width="1" height="1" fill="#5e5c59"/><rect x="26" y="48" width="1" height="1" fill="#5e5c59"/><rect x="28" y="48" width="1" height="1" fill="#4a4845"/><rect x="31" y="48" width="1" height="1" fill="#5e5c59"/><rect x="32" y="48" width="1" height="1" fill="#757370"/><rect x="35" y="48" width="1" height="1" fill="#757370"/><rect x="38" y="48" width="1" height="1" fill="#363532"/><rect x="22" y="49" width="1" height="1" fill="#757370"/><rect x="23" y="49" width="1" height="1" fill="#4a4845"/><rect x="25" y="49" width="1" height="1" fill="#363532"/><rect x="28" y="49" width="1" height="1" fill="#757370"/><rect x="29" y="49" width="1" height="1" fill="#5e5c59"/><rect x="30" y="49" width="1" height="1" fill="#5e5c59"/><rect x="31" y="49" width="1" height="1" fill="#4a4845"/><rect x="32" y="49" width="1" height="1" fill="#8d8a86"/><rect x="34" y="49" width="1" height="1" fill="#4a4845"/><rect x="35" y="49" width="1" height="1" fill="#8d8a86"/><rect x="37" y="49" width="1" height="1" fill="#4a4845"/><rect x="38" y="49" width="1" height="1" fill="#5e5c59"/><rect x="41" y="49" width="1" height="1" fill="#4a4845"/><rect x="43" y="49" width="1" height="1" fill="#8d8a86"/><rect x="44" y="49" width="1" height="1" fill="#4a4845"/><rect x="48" y="49" width="1" height="1" fill="#757370"/><rect x="49" y="49" width="1" height="1" fill="#8d8a86"/><rect x="50" y="49" width="1" height="1" fill="#5e5c59"/><rect x="18" y="50" width="1" height="1" fill="#363532"/><rect x="19" y="50" width="1" height="1" fill="#8d8a86"/><rect x="21" y="50" width="1" height="1" fill="#8d8a86"/><rect x="25" y="50" width="1" height="1" fill="#4a4845"/><rect x="26" y="50" width="1" height="1" fill="#757370"/><rect x="27" y="50" width="1" height="1" fill="#5e5c59"/><rect x="30" y="50" width="1" height="1" fill="#363532"/><rect x="31" y="50" width="1" height="1" fill="#757370"/><rect x="33" y="50" width="1" height="1" fill="#363532"/><rect x="34" y="50" width="1" height="1" fill="#8d8a86"/><rect x="37" y="50" width="1" height="1" fill="#363532"/><rect x="38" y="50" width="1" height="1" fill="#4a4845"/><rect x="47" y="50" width="1" height="1" fill="#4a4845"/><rect x="48" y="50" width="1" height="1" fill="#363532"/><rect x="50" y="50" width="1" height="1" fill="#4a4845"/><rect x="19" y="51" width="1" height="1" fill="#757370"/><rect x="21" y="51" width="1" height="1" fill="#363532"/><rect x="22" y="51" width="1" height="1" fill="#8d8a86"/><rect x="23" y="51" width="1" height="1" fill="#5e5c59"/><rect x="24" y="51" width="1" height="1" fill="#8d8a86"/><rect x="25" y="51" width="1" height="1" fill="#8d8a86"/><rect x="26" y="51" width="1" height="1" fill="#757370"/><rect x="27" y="51" width="1" height="1" fill="#5e5c59"/><rect x="30" y="51" width="1" height="1" fill="#4a4845"/><rect x="32" y="51" width="1" height="1" fill="#757370"/><rect x="34" y="51" width="1" height="1" fill="#363532"/><rect x="35" y="51" width="1" height="1" fill="#757370"/><rect x="36" y="51" width="1" height="1" fill="#4a4845"/><rect x="39" y="51" width="1" height="1" fill="#363532"/><rect x="44" y="51" width="1" height="1" fill="#5e5c59"/><rect x="49" y="51" width="1" height="1" fill="#4a4845"/><rect x="50" y="51" width="1" height="1" fill="#4a4845"/><rect x="18" y="52" width="1" height="1" fill="#5e5c59"/><rect x="19" y="52" width="1" height="1" fill="#8d8a86"/><rect x="21" y="52" width="1" height="1" fill="#4a4845"/><rect x="24" y="52" width="1" height="1" fill="#8d8a86"/><rect x="25" y="52" width="1" height="1" fill="#757370"/><rect x="26" y="52" width="1" height="1" fill="#363532"/><rect x="28" y="52" width="1" height="1" fill="#363532"/><rect x="30" y="52" width="1" height="1" fill="#757370"/><rect x="36" y="52" width="1" height="1" fill="#4a4845"/><rect x="40" y="52" width="1" height="1" fill="#757370"/><rect x="44" y="52" width="1" height="1" fill="#363532"/><rect x="45" y="52" width="1" height="1" fill="#5e5c59"/><rect x="50" y="52" width="1" height="1" fill="#5e5c59"/><rect x="19" y="53" width="1" height="1" fill="#363532"/><rect x="21" y="53" width="1" height="1" fill="#8d8a86"/><rect x="23" y="53" width="1" height="1" fill="#5e5c59"/><rect x="25" y="53" width="1" height="1" fill="#757370"/><rect x="26" y="53" width="1" height="1" fill="#757370"/><rect x="27" y="53" width="1" height="1" fill="#363532"/><rect x="28" y="53" width="1" height="1" fill="#363532"/><rect x="29" y="53" width="1" height="1" fill="#363532"/><rect x="31" y="53" width="1" height="1" fill="#5e5c59"/><rect x="32" y="53" width="1" height="1" fill="#8d8a86"/><rect x="33" y="53" width="1" height="1" fill="#5e5c59"/><rect x="35" y="53" width="1" height="1" fill="#8d8a86"/><rect x="39" y="53" width="1" height="1" fill="#4a4845"/><rect x="40" y="53" width="1" height="1" fill="#757370"/><rect x="42" y="53" width="1" height="1" fill="#5e5c59"/><rect x="45" y="53" width="1" height="1" fill="#757370"/><rect x="46" y="53" width="1" height="1" fill="#5e5c59"/><rect x="50" y="53" width="1" height="1" fill="#5e5c59"/><rect x="18" y="54" width="1" height="1" fill="#8d8a86"/><rect x="19" y="54" width="1" height="1" fill="#4a4845"/><rect x="20" y="54" width="1" height="1" fill="#4a4845"/><rect x="21" y="54" width="1" height="1" fill="#363532"/><rect x="23" y="54" width="1" height="1" fill="#8d8a86"/><rect x="24" y="54" width="1" height="1" fill="#757370"/><rect x="27" y="54" width="1" height="1" fill="#363532"/><rect x="28" y="54" width="1" height="1" fill="#757370"/><rect x="29" y="54" width="1" height="1" fill="#757370"/><rect x="30" y="54" width="1" height="1" fill="#4a4845"/><rect x="31" y="54" width="1" height="1" fill="#8d8a86"/><rect x="33" y="54" width="1" height="1" fill="#8d8a86"/><rect x="36" y="54" width="1" height="1" fill="#5e5c59"/><rect x="37" y="54" width="1" height="1" fill="#8d8a86"/><rect x="38" y="54" width="1" height="1" fill="#5e5c59"/><rect x="40" y="54" width="1" height="1" fill="#4a4845"/><rect x="41" y="54" width="1" height="1" fill="#4a4845"/><rect x="42" y="54" width="1" height="1" fill="#8d8a86"/><rect x="43" y="54" width="1" height="1" fill="#363532"/><rect x="44" y="54" width="1" height="1" fill="#4a4845"/><rect x="45" y="54" width="1" height="1" fill="#4a4845"/><rect x="47" y="54" width="1" height="1" fill="#757370"/><rect x="49" y="54" width="1" height="1" fill="#757370"/><rect x="13.7" y="14.8" width="26.2" height="25.7" fill="#5c5a57"/></svg> -->
<div class="a dl" style="left:155px;top:63px;width:532px;height:402px;background:#f0f0f0;overflow:hidden">
<div class="a" style="left:0.0px;top:0.0px;width:532.0px;height:20.0px;background:#fff"></div>
<span class="t" style="left:3.0px;top:5.08px;font-size:10.30px;color:#111;letter-spacing:-0.35px;-webkit-text-stroke:0.1px #111">Layer Style</span>
<svg class="a" style="left:515px;top:5px" width="10" height="10" viewBox="0 0 10 10"><path d="M0.5 0.5L9.5 9.5M9.5 0.5L0.5 9.5" stroke="#222" stroke-width="1"/></svg>
<div class="a" style="left:9.4px;top:32.7px;width:123.1px;height:357.7px;background:#ececec;border:1px solid #a9a9a9"></div>
<div class="a" style="left:10.4px;top:50.3px;width:121.1px;height:1.0px;background:#a8a8a8"></div>
<div class="a" style="left:10.4px;top:51.3px;width:121.1px;height:1.0px;background:#fdfdfd"></div>
<div class="a" style="left:10.4px;top:52.4px;width:121.1px;height:1.0px;background:#b0b0b0"></div>
<div class="a" style="left:10.4px;top:71.0px;width:121.1px;height:1.0px;background:#b3b3b3"></div>
<span class="t" style="left:15.4px;top:38.05px;font-size:8.45px;color:#1b1b1b;">Styles</span>
<span class="t" style="left:15.4px;top:57.65px;font-size:8.45px;color:#1b1b1b;">Blending Options: Default</span>
<div class="a" style="left:10.4px;top:88.7px;width:121.1px;height:1.0px;background:#fbfbfb"></div>
<div class="a" style="left:14.4px;top:75.1px;width:10.0px;height:9.3px;background:#fff;border:1px solid #4a4a4a"></div>
<span class="t" style="left:28.4px;top:76.25px;font-size:8.45px;color:#1b1b1b;">Bevel &amp; Emboss</span>
<div class="a" style="left:10.4px;top:107.2px;width:121.1px;height:1.0px;background:#fbfbfb"></div>
<div class="a" style="left:25.4px;top:93.7px;width:10.0px;height:9.3px;background:#fff;border:1px solid #4a4a4a"></div>
<span class="t" style="left:39.4px;top:94.82px;font-size:8.45px;color:#1b1b1b;">Contour</span>
<div class="a" style="left:10.4px;top:125.8px;width:121.1px;height:1.0px;background:#fbfbfb"></div>
<div class="a" style="left:25.4px;top:112.2px;width:10.0px;height:9.3px;background:#fff;border:1px solid #4a4a4a"></div>
<span class="t" style="left:39.4px;top:113.39px;font-size:8.45px;color:#1b1b1b;">Texture</span>
<div class="a" style="left:10.4px;top:144.4px;width:121.1px;height:1.0px;background:#fbfbfb"></div>
<div class="a" style="left:14.4px;top:130.8px;width:10.0px;height:9.3px;background:#fff;border:1px solid #4a4a4a"></div>
<span class="t" style="left:28.4px;top:131.96px;font-size:8.45px;color:#1b1b1b;">Stroke</span>
<div class="a" style="left:10.4px;top:162.9px;width:121.1px;height:1.0px;background:#fbfbfb"></div>
<div class="a" style="left:14.4px;top:149.4px;width:10.0px;height:9.3px;background:#fff;border:1px solid #4a4a4a"></div>
<span class="t" style="left:28.4px;top:150.53px;font-size:8.45px;color:#1b1b1b;">Inner Shadow</span>
<div class="a" style="left:10.4px;top:181.5px;width:121.1px;height:1.0px;background:#fbfbfb"></div>
<div class="a" style="left:14.4px;top:167.9px;width:10.0px;height:9.3px;background:#fff;border:1px solid #4a4a4a"></div>
<span class="t" style="left:28.4px;top:169.10px;font-size:8.45px;color:#1b1b1b;">Inner Glow</span>
<div class="a" style="left:10.4px;top:200.1px;width:121.1px;height:1.0px;background:#fbfbfb"></div>
<div class="a" style="left:14.4px;top:186.5px;width:10.0px;height:9.3px;background:#fff;border:1px solid #4a4a4a"></div>
<span class="t" style="left:28.4px;top:187.67px;font-size:8.45px;color:#1b1b1b;">Satin</span>
<div class="a" style="left:10.4px;top:218.7px;width:121.1px;height:1.0px;background:#fbfbfb"></div>
<div class="a" style="left:14.4px;top:205.1px;width:10.0px;height:9.3px;background:#fff;border:1px solid #4a4a4a"></div>
<span class="t" style="left:28.4px;top:206.24px;font-size:8.45px;color:#1b1b1b;">Color Overlay</span>
<div class="a" style="left:10.4px;top:237.2px;width:121.1px;height:1.0px;background:#fbfbfb"></div>
<div class="a" style="left:14.4px;top:223.7px;width:10.0px;height:9.3px;background:#fff;border:1px solid #4a4a4a"></div>
<span class="t" style="left:28.4px;top:224.81px;font-size:8.45px;color:#1b1b1b;">Gradient Overlay</span>
<div class="a" style="left:10.4px;top:255.8px;width:121.1px;height:1.0px;background:#fbfbfb"></div>
<div class="a" style="left:14.4px;top:242.2px;width:10.0px;height:9.3px;background:#fff;border:1px solid #4a4a4a"></div>
<span class="t" style="left:28.4px;top:243.38px;font-size:8.45px;color:#1b1b1b;">Pattern Overlay</span>
<div class="a" style="left:10.4px;top:274.4px;width:121.1px;height:1.0px;background:#fbfbfb"></div>
<div class="a" style="left:14.4px;top:260.8px;width:10.0px;height:9.3px;background:#fff;border:1px solid #4a4a4a"></div>
<span class="t" style="left:28.4px;top:261.95px;font-size:8.45px;color:#1b1b1b;">Outer Glow</span>
<div class="a" style="left:10.4px;top:275.9px;width:121.1px;height:17.6px;background:#0078d7"></div>
<div class="a" style="left:14.4px;top:280.5px;width:9.0px;height:8.5px;background:#e9eef3;border:1px solid #8aa6c2"></div>
<svg class="a" style="left:14.4px;top:280.5px" width="9" height="9"><path d="M1.8 4.3L3.8 6.5L7.5 1.9" stroke="#5a5a5a" stroke-width="1.3" fill="none"/></svg>
<span class="t" style="left:28.4px;top:280.62px;font-size:8.45px;color:#0a2560;">Drop Shadow</span>
<div class="a" style="left:147.3px;top:35.4px;width:287.0px;height:358.0px;border:1px solid #a0a0a0;box-shadow:inset 0 0 0 1px #fbfbfb;background:#ededed"></div>
<div class="a" style="left:160.3px;top:30.0px;width:68.7px;height:5.4px;background:#f0f0f0"></div>
<div class="a" style="left:160.3px;top:35.4px;width:68.7px;height:4.6px;background:#ededed"></div>
<span class="t" style="left:166.8px;top:31.12px;font-size:8.60px;color:#1b1b1b;font-weight:bold;">Drop Shadow</span>
<div class="a" style="left:155.4px;top:47.3px;width:270.9px;height:144.1px;border:1px solid #a0a0a0;box-shadow:inset 0 0 0 1px #fbfbfb;background:transparent"></div>
<div class="a" style="left:168.0px;top:42.0px;width:53.0px;height:10.0px;background:#ededed"></div>
<span class="t" style="left:175.6px;top:43.02px;font-size:8.60px;color:#1b1b1b;font-weight:bold;">Structure</span>
<span class="t" style="left:173.4px;top:61.35px;font-size:8.45px;color:#1b1b1b;">Blend Mode:</span>
<div class="a" style="left:224.8px;top:56.3px;width:101.8px;height:19.0px;background:#fff;border:1px solid #a0a0a0"></div>
<span class="t" style="left:228.5px;top:61.75px;font-size:8.45px;color:#1b1b1b;">Multiply</span>
<svg class="a" style="left:315.5px;top:63px" width="9" height="6"><path d="M1 1L4.5 4.5L8 1" stroke="#333" stroke-width="1.1" fill="none"/></svg>
<div class="a" style="left:330.4px;top:59.2px;width:35.6px;height:12.8px;background:#000;border:1px solid #6c6c6c"></div>
<span class="t" style="left:188.6px;top:81.85px;font-size:8.45px;color:#1b1b1b;">Opacity:</span>
<div class="a" style="left:228.0px;top:81.6px;width:84.0px;height:4.0px;border-radius:2px;background:linear-gradient(#8a8a8a,#b9b9b9)"></div>
<svg class="a" style="left:286.0px;top:83.0px" width="10" height="8" viewBox="0 0 10 8"><path d="M1 7.5V4.2L5 0.8L9 4.2V7.5Z" fill="#e4e4e4" stroke="#8c8c8c" stroke-width="1" stroke-linejoin="round"/></svg>
<div class="a" style="left:318.8px;top:78.5px;width:45.9px;height:15.0px;background:#fff;border:1px solid #b0b0b0"></div>
<span class="t" style="left:324.3px;top:81.65px;font-size:8.45px;color:#1b1b1b;">75</span>
<span class="t" style="left:366.6px;top:81.85px;font-size:8.45px;color:#1b1b1b;">%</span>
<span class="t" style="left:196.6px;top:107.85px;font-size:8.45px;color:#1b1b1b;">Angle:</span>
<svg class="a" style="left:225px;top:98px" width="30" height="30" viewBox="0 0 30 30"><defs><radialGradient id="rg" cx="0.5" cy="0.5" r="0.5"><stop offset="0" stop-color="#e2e2e2"/><stop offset="1" stop-color="#f4f4f4"/></radialGradient></defs><circle cx="14.6" cy="14.4" r="13.8" fill="url(#rg)" stroke="#8a8a8a" stroke-width="1"/><path d="M14.6 14.4L7.8 2.6" stroke="#555" stroke-width="1"/><circle cx="14.6" cy="14.4" r="1.3" fill="#444"/></svg>
<div class="a" style="left:258.4px;top:104.4px;width:34.6px;height:15.2px;background:#fff;border:1px solid #b0b0b0"></div>
<span class="t" style="left:263.9px;top:107.55px;font-size:8.45px;color:#1b1b1b;">120</span>
<span class="t" style="left:296.5px;top:108.85px;font-size:8.45px;color:#1b1b1b;">°</span>
<div class="a" style="left:308.0px;top:106.0px;width:11.0px;height:11.0px;background:#fff;border:1px solid #333"></div>
<svg class="a" style="left:308px;top:106px" width="11" height="11"><path d="M2 5.5L4.5 8.5L9.5 2" stroke="#222" stroke-width="1.2" fill="none"/></svg>
<span class="t" style="left:320.6px;top:107.85px;font-size:8.45px;color:#1b1b1b;">Use Global Light</span>
<span class="t" style="left:187.0px;top:134.35px;font-size:8.45px;color:#1b1b1b;">Distance:</span>
<div class="a" style="left:228.0px;top:134.3px;width:84.0px;height:4.0px;border-radius:2px;background:linear-gradient(#8a8a8a,#b9b9b9)"></div>
<svg class="a" style="left:246.0px;top:136.8px" width="10" height="8" viewBox="0 0 10 8"><path d="M1 7.5V4.2L5 0.8L9 4.2V7.5Z" fill="#e4e4e4" stroke="#8c8c8c" stroke-width="1" stroke-linejoin="round"/></svg>
<div class="a" style="left:319.0px;top:131.0px;width:45.4px;height:14.0px;background:#fff;border:1px solid #b0b0b0"></div>
<span class="t" style="left:324.5px;top:134.15px;font-size:8.45px;color:#1b1b1b;">26</span>
<span class="t" style="left:367.0px;top:134.35px;font-size:8.45px;color:#1b1b1b;">px</span>
<span class="t" style="left:190.0px;top:152.75px;font-size:8.45px;color:#1b1b1b;">Spread:</span>
<div class="a" style="left:228.0px;top:153.0px;width:84.0px;height:4.0px;border-radius:2px;background:linear-gradient(#8a8a8a,#b9b9b9)"></div>
<svg class="a" style="left:224.0px;top:154.5px" width="10" height="8" viewBox="0 0 10 8"><path d="M1 7.5V4.2L5 0.8L9 4.2V7.5Z" fill="#e4e4e4" stroke="#8c8c8c" stroke-width="1" stroke-linejoin="round"/></svg>
<div class="a" style="left:319.0px;top:149.5px;width:45.4px;height:13.8px;background:#fff;border:1px solid #b0b0b0"></div>
<span class="t" style="left:324.5px;top:152.65px;font-size:8.45px;color:#1b1b1b;">0</span>
<span class="t" style="left:366.6px;top:152.75px;font-size:8.45px;color:#1b1b1b;">%</span>
<span class="t" style="left:202.0px;top:171.85px;font-size:8.45px;color:#1b1b1b;">Size:</span>
<div class="a" style="left:228.0px;top:171.4px;width:84.0px;height:4.0px;border-radius:2px;background:linear-gradient(#8a8a8a,#b9b9b9)"></div>
<svg class="a" style="left:228.3px;top:172.5px" width="10" height="8" viewBox="0 0 10 8"><path d="M1 7.5V4.2L5 0.8L9 4.2V7.5Z" fill="#e4e4e4" stroke="#8c8c8c" stroke-width="1" stroke-linejoin="round"/></svg>
<div class="a" style="left:319.0px;top:168.2px;width:45.4px;height:13.8px;background:#fff;border:1px solid #b0b0b0"></div>
<span class="t" style="left:324.5px;top:171.35px;font-size:8.45px;color:#1b1b1b;">5</span>
<span class="t" style="left:367.0px;top:171.85px;font-size:8.45px;color:#1b1b1b;">px</span>
<div class="a" style="left:155.3px;top:201.1px;width:271.0px;height:62.9px;border:1px solid #a0a0a0;box-shadow:inset 0 0 0 1px #fbfbfb;background:transparent"></div>
<div class="a" style="left:168.0px;top:196.0px;width:40.0px;height:10.0px;background:#ededed"></div>
<span class="t" style="left:174.0px;top:196.72px;font-size:8.60px;color:#1b1b1b;font-weight:bold;">Quality</span>
<span class="t" style="left:185.9px;top:219.85px;font-size:8.45px;color:#1b1b1b;">Contour:</span>
<svg class="a" style="left:225.2px;top:210.9px" width="35" height="26" viewBox="0 0 35 26"><rect x="0.5" y="0.5" width="34" height="25" fill="#e9e9e9" stroke="#1a1a1a"/><rect x="1" y="1" width="24.5" height="24" fill="#9a9a9a"/><path d="M3 1 C6 10, 9 24, 13 24.5 C17 24, 20 10, 24.5 1 Z" fill="#fff"/><path d="M25.5 1V25" stroke="#1a1a1a"/><path d="M27.3 11.5H31.7L29.5 14.8Z" fill="#111"/></svg>
<div class="a" style="left:271.3px;top:218.2px;width:10.7px;height:10.3px;background:#fff;border:1px solid #333"></div>
<span class="t" style="left:284.4px;top:219.85px;font-size:8.45px;color:#1b1b1b;">Anti-aliased</span>
<span class="t" style="left:197.5px;top:243.85px;font-size:8.45px;color:#1b1b1b;">Noise:</span>
<div class="a" style="left:228.2px;top:243.7px;width:84.0px;height:4.0px;border-radius:2px;background:linear-gradient(#8a8a8a,#b9b9b9)"></div>
<svg class="a" style="left:265.6px;top:245.5px" width="10" height="8" viewBox="0 0 10 8"><path d="M1 7.5V4.2L5 0.8L9 4.2V7.5Z" fill="#e4e4e4" stroke="#8c8c8c" stroke-width="1" stroke-linejoin="round"/></svg>
<div class="a" style="left:319.2px;top:241.4px;width:45.0px;height:13.8px;background:#fff;border:1px solid #b0b0b0"></div>
<span class="t" style="left:324.7px;top:244.55px;font-size:8.45px;color:#1b1b1b;">51</span>
<span class="t" style="left:366.8px;top:243.85px;font-size:8.45px;color:#1b1b1b;">%</span>
<span class="t" style="left:241.0px;top:270.35px;font-size:8.45px;color:#444;">Layer Knocks Out Drop Shadow</span>
<div class="a" style="left:180.6px;top:272.0px;width:243.2px;height:48.0px;border:5px solid #000;background:#ededed"></div>
<div class="a" style="left:228.0px;top:268.3px;width:10.8px;height:10.3px;background:transparent;border:1px solid #222"></div>
<div class="btn" style="left:210.3px;top:283.3px;width:70.3px;height:14px;line-height:14.6px">Make Default</div>
<div class="btn" style="left:289.1px;top:283.3px;width:81.8px;height:14px;line-height:14.6px">Reset to Default</div>
<div class="btn" style="left:447.6px;top:32.3px;width:75.4px;height:14.7px;border:2px solid #0a64c8;font-size:10px;line-height:13.5px">OK</div>
<div class="btn" style="left:447.6px;top:55.7px;width:75.4px;height:15px;font-size:10px;line-height:13.6px">Cancel</div>
<div class="btn" style="left:447.6px;top:79.2px;width:75.4px;height:15.6px;font-size:10.2px;line-height:14.4px;letter-spacing:0.35px">New Style...</div>
<div class="a" style="left:457.8px;top:102.0px;width:10.6px;height:10.7px;background:#fff;border:1px solid #333"></div>
<svg class="a" style="left:457.8px;top:102px" width="11" height="11"><path d="M2 5.5L4.5 8.5L9.5 2" stroke="#222" stroke-width="1.2" fill="none"/></svg>
<span class="t" style="left:471.0px;top:103.57px;font-size:10.20px;color:#1b1b1b;">Preview</span>
<svg class="a" style="left:457.5px;top:120.2px" width="56" height="56" viewBox="0 0 56 56" shape-rendering="crispEdges"><rect x="0" y="0" width="56" height="56" fill="#dcd9d5" stroke="#c9c9c9"/><rect x="18" y="24" width="33" height="31" fill="#b5b2ad"/><rect x="40" y="24" width="1" height="1" fill="#4a4845"/><rect x="41" y="24" width="1" height="1" fill="#363532"/><rect x="42" y="24" width="1" height="1" fill="#8d8a86"/><rect x="43" y="24" width="1" height="1" fill="#8d8a86"/><rect x="44" y="24" width="1" height="1" fill="#8d8a86"/><rect x="45" y="24" width="1" height="1" fill="#363532"/><rect x="46" y="24" width="1" height="1" fill="#363532"/><rect x="47" y="24" width="1" height="1" fill="#8d8a86"/><rect x="48" y="24" width="1" height="1" fill="#8d8a86"/><rect x="49" y="24" width="1" height="1" fill="#4a4845"/><rect x="40" y="25" width="1" height="1" fill="#363532"/><rect x="41" y="25" width="1" height="1" fill="#757370"/><rect x="42" y="25" width="1" height="1" fill="#4a4845"/><rect x="43" y="25" width="1" height="1" fill="#4a4845"/><rect x="44" y="25" width="1" height="1" fill="#4a4845"/><rect x="45" y="25" width="1" height="1" fill="#8d8a86"/><rect x="46" y="25" width="1" height="1" fill="#4a4845"/><rect x="47" y="25" width="1" height="1" fill="#8d8a86"/><rect x="49" y="25" width="1" height="1" fill="#8d8a86"/><rect x="47" y="26" width="1" height="1" fill="#4a4845"/><rect x="50" y="26" width="1" height="1" fill="#8d8a86"/><rect x="45" y="27" width="1" height="1" fill="#8d8a86"/><rect x="48" y="27" width="1" height="1" fill="#757370"/><rect x="49" y="27" width="1" height="1" fill="#363532"/><rect x="49" y="28" width="1" height="1" fill="#363532"/><rect x="50" y="28" width="1" height="1" fill="#5e5c59"/><rect x="46" y="29" width="1" height="1" fill="#757370"/><rect x="49" y="29" width="1" height="1" fill="#4a4845"/><rect x="40" y="30" width="1" height="1" fill="#4a4845"/><rect x="44" y="30" width="1" height="1" fill="#757370"/><rect x="49" y="30" width="1" height="1" fill="#757370"/><rect x="43" y="31" width="1" height="1" fill="#4a4845"/><rect x="48" y="31" width="1" height="1" fill="#363532"/><rect x="49" y="31" width="1" height="1" fill="#8d8a86"/><rect x="50" y="31" width="1" height="1" fill="#8d8a86"/><rect x="41" y="32" width="1" height="1" fill="#8d8a86"/><rect x="49" y="32" width="1" height="1" fill="#757370"/><rect x="50" y="32" width="1" height="1" fill="#363532"/><rect x="45" y="33" width="1" height="1" fill="#8d8a86"/><rect x="46" y="33" width="1" height="1" fill="#363532"/><rect x="40" y="34" width="1" height="1" fill="#4a4845"/><rect x="42" y="34" width="1" height="1" fill="#5e5c59"/><rect x="46" y="34" width="1" height="1" fill="#757370"/><rect x="49" y="34" width="1" height="1" fill="#363532"/><rect x="50" y="34" width="1" height="1" fill="#5e5c59"/><rect x="50" y="35" width="1" height="1" fill="#363532"/><rect x="43" y="36" width="1" height="1" fill="#4a4845"/><rect x="46" y="37" width="1" height="1" fill="#363532"/><rect x="49" y="37" width="1" height="1" fill="#8d8a86"/><rect x="48" y="38" width="1" height="1" fill="#8d8a86"/><rect x="40" y="39" width="1" height="1" fill="#5e5c59"/><rect x="42" y="39" width="1" height="1" fill="#363532"/><rect x="47" y="39" width="1" height="1" fill="#5e5c59"/><rect x="48" y="39" width="1" height="1" fill="#757370"/><rect x="49" y="39" width="1" height="1" fill="#363532"/><rect x="40" y="40" width="1" height="1" fill="#4a4845"/><rect x="41" y="40" width="1" height="1" fill="#8d8a86"/><rect x="44" y="40" width="1" height="1" fill="#8d8a86"/><rect x="49" y="40" width="1" height="1" fill="#363532"/><rect x="19" y="41" width="1" height="1" fill="#4a4845"/><rect x="23" y="41" width="1" height="1" fill="#5e5c59"/><rect x="24" y="41" width="1" height="1" fill="#8d8a86"/><rect x="25" y="41" width="1" height="1" fill="#8d8a86"/><rect x="26" y="41" width="1" height="1" fill="#8d8a86"/><rect x="27" y="41" width="1" height="1" fill="#4a4845"/><rect x="28" y="41" width="1" height="1" fill="#5e5c59"/><rect x="35" y="41" width="1" height="1" fill="#4a4845"/><rect x="37" y="41" width="1" height="1" fill="#757370"/><rect x="41" y="41" width="1" height="1" fill="#4a4845"/><rect x="49" y="41" width="1" height="1" fill="#8d8a86"/><rect x="50" y="41" width="1" height="1" fill="#4a4845"/><rect x="18" y="42" width="1" height="1" fill="#363532"/><rect x="19" y="42" width="1" height="1" fill="#8d8a86"/><rect x="20" y="42" width="1" height="1" fill="#363532"/><rect x="21" y="42" width="1" height="1" fill="#8d8a86"/><rect x="24" y="42" width="1" height="1" fill="#5e5c59"/><rect x="25" y="42" width="1" height="1" fill="#8d8a86"/><rect x="28" y="42" width="1" height="1" fill="#8d8a86"/><rect x="31" y="42" width="1" height="1" fill="#8d8a86"/><rect x="33" y="42" width="1" height="1" fill="#757370"/><rect x="34" y="42" width="1" height="1" fill="#363532"/><rect x="35" y="42" width="1" height="1" fill="#5e5c59"/><rect x="36" y="42" width="1" height="1" fill="#4a4845"/><rect x="37" y="42" width="1" height="1" fill="#4a4845"/><rect x="41" y="42" width="1" height="1" fill="#5e5c59"/><rect x="42" y="42" width="1" height="1" fill="#4a4845"/><rect x="50" y="42" width="1" height="1" fill="#757370"/><rect x="19" y="43" width="1" height="1" fill="#757370"/><rect x="20" y="43" width="1" height="1" fill="#5e5c59"/><rect x="21" y="43" width="1" height="1" fill="#5e5c59"/><rect x="22" y="43" width="1" height="1" fill="#8d8a86"/><rect x="23" y="43" width="1" height="1" fill="#363532"/><rect x="24" y="43" width="1" height="1" fill="#8d8a86"/><rect x="27" y="43" width="1" height="1" fill="#4a4845"/><rect x="29" y="43" width="1" height="1" fill="#5e5c59"/><rect x="30" y="43" width="1" height="1" fill="#4a4845"/><rect x="31" y="43" width="1" height="1" fill="#4a4845"/><rect x="36" y="43" width="1" height="1" fill="#8d8a86"/><rect x="40" y="43" width="1" height="1" fill="#363532"/><rect x="45" y="43" width="1" height="1" fill="#363532"/><rect x="47" y="43" width="1" height="1" fill="#4a4845"/><rect x="48" y="43" width="1" height="1" fill="#363532"/><rect x="49" y="43" width="1" height="1" fill="#5e5c59"/><rect x="18" y="44" width="1" height="1" fill="#5e5c59"/><rect x="20" y="44" width="1" height="1" fill="#4a4845"/><rect x="23" y="44" width="1" height="1" fill="#4a4845"/><rect x="24" y="44" width="1" height="1" fill="#5e5c59"/><rect x="27" y="44" width="1" height="1" fill="#757370"/><rect x="29" y="44" width="1" height="1" fill="#5e5c59"/><rect x="32" y="44" width="1" height="1" fill="#363532"/><rect x="35" y="44" width="1" height="1" fill="#757370"/><rect x="36" y="44" width="1" height="1" fill="#757370"/><rect x="37" y="44" width="1" height="1" fill="#757370"/><rect x="48" y="44" width="1" height="1" fill="#5e5c59"/><rect x="18" y="45" width="1" height="1" fill="#5e5c59"/><rect x="19" y="45" width="1" height="1" fill="#363532"/><rect x="20" y="45" width="1" height="1" fill="#757370"/><rect x="23" y="45" width="1" height="1" fill="#4a4845"/><rect x="25" y="45" width="1" height="1" fill="#4a4845"/><rect x="26" y="45" width="1" height="1" fill="#757370"/><rect x="27" y="45" width="1" height="1" fill="#5e5c59"/><rect x="31" y="45" width="1" height="1" fill="#5e5c59"/><rect x="32" y="45" width="1" height="1" fill="#4a4845"/><rect x="33" y="45" width="1" height="1" fill="#757370"/><rect x="34" y="45" width="1" height="1" fill="#5e5c59"/><rect x="36" y="45" width="1" height="1" fill="#8d8a86"/><rect x="38" y="45" width="1" height="1" fill="#363532"/><rect x="39" y="45" width="1" height="1" fill="#8d8a86"/><rect x="40" y="45" width="1" height="1" fill="#363532"/><rect x="43" y="45" width="1" height="1" fill="#8d8a86"/><rect x="45" y="45" width="1" height="1" fill="#8d8a86"/><rect x="49" y="45" width="1" height="1" fill="#8d8a86"/><rect x="18" y="46" width="1" height="1" fill="#8d8a86"/><rect x="22" y="46" width="1" height="1" fill="#8d8a86"/><rect x="26" y="46" width="1" height="1" fill="#8d8a86"/><rect x="31" y="46" width="1" height="1" fill="#363532"/><rect x="32" y="46" width="1" height="1" fill="#5e5c59"/><rect x="34" y="46" width="1" height="1" fill="#757370"/><rect x="39" y="46" width="1" height="1" fill="#363532"/><rect x="41" y="46" width="1" height="1" fill="#8d8a86"/><rect x="43" y="46" width="1" height="1" fill="#8d8a86"/><rect x="44" y="46" width="1" height="1" fill="#757370"/><rect x="46" y="46" width="1" height="1" fill="#5e5c59"/><rect x="49" y="46" width="1" height="1" fill="#757370"/><rect x="50" y="46" width="1" height="1" fill="#757370"/><rect x="18" y="47" width="1" height="1" fill="#5e5c59"/><rect x="22" y="47" width="1" height="1" fill="#4a4845"/><rect x="23" y="47" width="1" height="1" fill="#5e5c59"/><rect x="25" y="47" width="1" height="1" fill="#757370"/><rect x="26" y="47" width="1" height="1" fill="#5e5c59"/><rect x="28" y="47" width="1" height="1" fill="#4a4845"/><rect x="30" y="47" width="1" height="1" fill="#8d8a86"/><rect x="31" y="47" width="1" height="1" fill="#757370"/><rect x="32" y="47" width="1" height="1" fill="#363532"/><rect x="35" y="47" width="1" height="1" fill="#363532"/><rect x="37" y="47" width="1" height="1" fill="#757370"/><rect x="38" y="47" width="1" height="1" fill="#8d8a86"/><rect x="46" y="47" width="1" height="1" fill="#8d8a86"/><rect x="48" y="47" width="1" height="1" fill="#8d8a86"/><rect x="50" y="47" width="1" height="1" fill="#363532"/><rect x="19" y="48" width="1" height="1" fill="#757370"/><rect x="20" y="48" width="1" height="1" fill="#4a4845"/><rect x="21" y="48" width="1" height="1" fill="#757370"/><rect x="23" y="48" width="1" height="1" fill="#4a4845"/><rect x="24" y="48" width="1" height="1" fill="#757370"/><rect x="25" y="48" width="1" height="1" fill="#5e5c59"/><rect x="26" y="48" width="1" height="1" fill="#5e5c59"/><rect x="28" y="48" width="1" height="1" fill="#4a4845"/><rect x="31" y="48" width="1" height="1" fill="#5e5c59"/><rect x="32" y="48" width="1" height="1" fill="#757370"/><rect x="35" y="48" width="1" height="1" fill="#757370"/><rect x="38" y="48" width="1" height="1" fill="#363532"/><rect x="22" y="49" width="1" height="1" fill="#757370"/><rect x="23" y="49" width="1" height="1" fill="#4a4845"/><rect x="25" y="49" width="1" height="1" fill="#363532"/><rect x="28" y="49" width="1" height="1" fill="#757370"/><rect x="29" y="49" width="1" height="1" fill="#5e5c59"/><rect x="30" y="49" width="1" height="1" fill="#5e5c59"/><rect x="31" y="49" width="1" height="1" fill="#4a4845"/><rect x="32" y="49" width="1" height="1" fill="#8d8a86"/><rect x="34" y="49" width="1" height="1" fill="#4a4845"/><rect x="35" y="49" width="1" height="1" fill="#8d8a86"/><rect x="37" y="49" width="1" height="1" fill="#4a4845"/><rect x="38" y="49" width="1" height="1" fill="#5e5c59"/><rect x="41" y="49" width="1" height="1" fill="#4a4845"/><rect x="43" y="49" width="1" height="1" fill="#8d8a86"/><rect x="44" y="49" width="1" height="1" fill="#4a4845"/><rect x="48" y="49" width="1" height="1" fill="#757370"/><rect x="49" y="49" width="1" height="1" fill="#8d8a86"/><rect x="50" y="49" width="1" height="1" fill="#5e5c59"/><rect x="18" y="50" width="1" height="1" fill="#363532"/><rect x="19" y="50" width="1" height="1" fill="#8d8a86"/><rect x="21" y="50" width="1" height="1" fill="#8d8a86"/><rect x="25" y="50" width="1" height="1" fill="#4a4845"/><rect x="26" y="50" width="1" height="1" fill="#757370"/><rect x="27" y="50" width="1" height="1" fill="#5e5c59"/><rect x="30" y="50" width="1" height="1" fill="#363532"/><rect x="31" y="50" width="1" height="1" fill="#757370"/><rect x="33" y="50" width="1" height="1" fill="#363532"/><rect x="34" y="50" width="1" height="1" fill="#8d8a86"/><rect x="37" y="50" width="1" height="1" fill="#363532"/><rect x="38" y="50" width="1" height="1" fill="#4a4845"/><rect x="47" y="50" width="1" height="1" fill="#4a4845"/><rect x="48" y="50" width="1" height="1" fill="#363532"/><rect x="50" y="50" width="1" height="1" fill="#4a4845"/><rect x="19" y="51" width="1" height="1" fill="#757370"/><rect x="21" y="51" width="1" height="1" fill="#363532"/><rect x="22" y="51" width="1" height="1" fill="#8d8a86"/><rect x="23" y="51" width="1" height="1" fill="#5e5c59"/><rect x="24" y="51" width="1" height="1" fill="#8d8a86"/><rect x="25" y="51" width="1" height="1" fill="#8d8a86"/><rect x="26" y="51" width="1" height="1" fill="#757370"/><rect x="27" y="51" width="1" height="1" fill="#5e5c59"/><rect x="30" y="51" width="1" height="1" fill="#4a4845"/><rect x="32" y="51" width="1" height="1" fill="#757370"/><rect x="34" y="51" width="1" height="1" fill="#363532"/><rect x="35" y="51" width="1" height="1" fill="#757370"/><rect x="36" y="51" width="1" height="1" fill="#4a4845"/><rect x="39" y="51" width="1" height="1" fill="#363532"/><rect x="44" y="51" width="1" height="1" fill="#5e5c59"/><rect x="49" y="51" width="1" height="1" fill="#4a4845"/><rect x="50" y="51" width="1" height="1" fill="#4a4845"/><rect x="18" y="52" width="1" height="1" fill="#5e5c59"/><rect x="19" y="52" width="1" height="1" fill="#8d8a86"/><rect x="21" y="52" width="1" height="1" fill="#4a4845"/><rect x="24" y="52" width="1" height="1" fill="#8d8a86"/><rect x="25" y="52" width="1" height="1" fill="#757370"/><rect x="26" y="52" width="1" height="1" fill="#363532"/><rect x="28" y="52" width="1" height="1" fill="#363532"/><rect x="30" y="52" width="1" height="1" fill="#757370"/><rect x="36" y="52" width="1" height="1" fill="#4a4845"/><rect x="40" y="52" width="1" height="1" fill="#757370"/><rect x="44" y="52" width="1" height="1" fill="#363532"/><rect x="45" y="52" width="1" height="1" fill="#5e5c59"/><rect x="50" y="52" width="1" height="1" fill="#5e5c59"/><rect x="19" y="53" width="1" height="1" fill="#363532"/><rect x="21" y="53" width="1" height="1" fill="#8d8a86"/><rect x="23" y="53" width="1" height="1" fill="#5e5c59"/><rect x="25" y="53" width="1" height="1" fill="#757370"/><rect x="26" y="53" width="1" height="1" fill="#757370"/><rect x="27" y="53" width="1" height="1" fill="#363532"/><rect x="28" y="53" width="1" height="1" fill="#363532"/><rect x="29" y="53" width="1" height="1" fill="#363532"/><rect x="31" y="53" width="1" height="1" fill="#5e5c59"/><rect x="32" y="53" width="1" height="1" fill="#8d8a86"/><rect x="33" y="53" width="1" height="1" fill="#5e5c59"/><rect x="35" y="53" width="1" height="1" fill="#8d8a86"/><rect x="39" y="53" width="1" height="1" fill="#4a4845"/><rect x="40" y="53" width="1" height="1" fill="#757370"/><rect x="42" y="53" width="1" height="1" fill="#5e5c59"/><rect x="45" y="53" width="1" height="1" fill="#757370"/><rect x="46" y="53" width="1" height="1" fill="#5e5c59"/><rect x="50" y="53" width="1" height="1" fill="#5e5c59"/><rect x="18" y="54" width="1" height="1" fill="#8d8a86"/><rect x="19" y="54" width="1" height="1" fill="#4a4845"/><rect x="20" y="54" width="1" height="1" fill="#4a4845"/><rect x="21" y="54" width="1" height="1" fill="#363532"/><rect x="23" y="54" width="1" height="1" fill="#8d8a86"/><rect x="24" y="54" width="1" height="1" fill="#757370"/><rect x="27" y="54" width="1" height="1" fill="#363532"/><rect x="28" y="54" width="1" height="1" fill="#757370"/><rect x="29" y="54" width="1" height="1" fill="#757370"/><rect x="30" y="54" width="1" height="1" fill="#4a4845"/><rect x="31" y="54" width="1" height="1" fill="#8d8a86"/><rect x="33" y="54" width="1" height="1" fill="#8d8a86"/><rect x="36" y="54" width="1" height="1" fill="#5e5c59"/><rect x="37" y="54" width="1" height="1" fill="#8d8a86"/><rect x="38" y="54" width="1" height="1" fill="#5e5c59"/><rect x="40" y="54" width="1" height="1" fill="#4a4845"/><rect x="41" y="54" width="1" height="1" fill="#4a4845"/><rect x="42" y="54" width="1" height="1" fill="#8d8a86"/><rect x="43" y="54" width="1" height="1" fill="#363532"/><rect x="44" y="54" width="1" height="1" fill="#4a4845"/><rect x="45" y="54" width="1" height="1" fill="#4a4845"/><rect x="47" y="54" width="1" height="1" fill="#757370"/><rect x="49" y="54" width="1" height="1" fill="#757370"/><rect x="13.7" y="14.8" width="26.2" height="25.7" fill="#5c5a57"/></svg>
</div>
</body></html>
